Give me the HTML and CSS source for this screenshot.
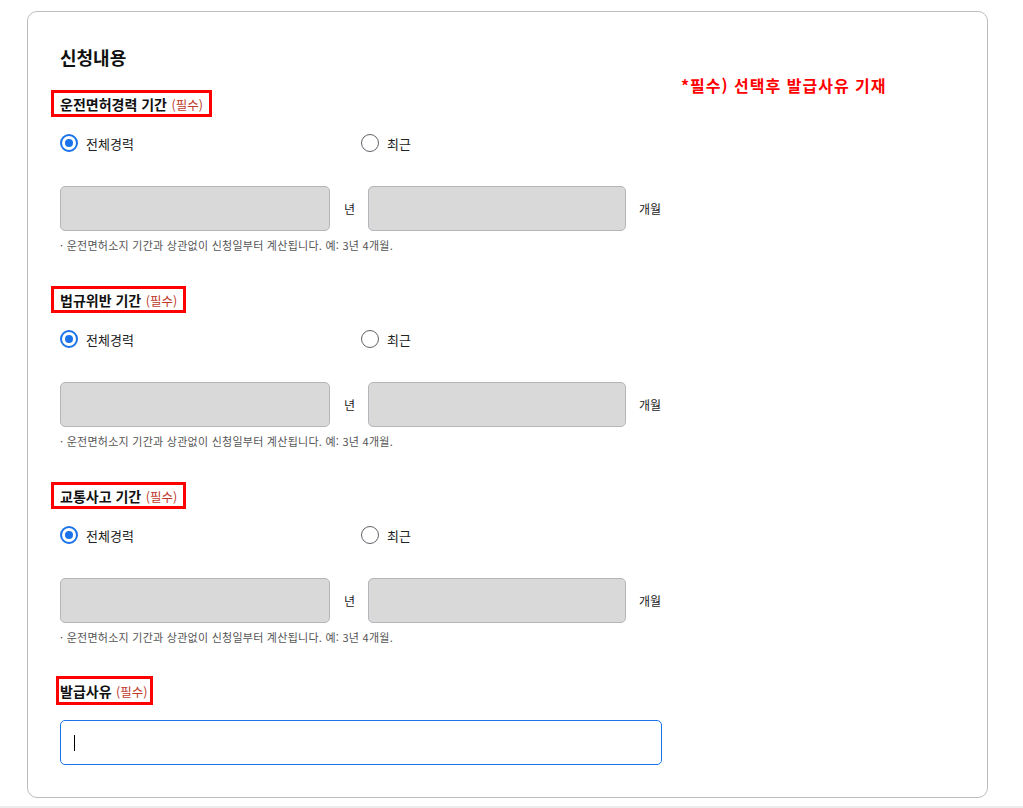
FILE: index.html
```html
<!DOCTYPE html>
<html lang="ko">
<head>
<meta charset="utf-8">
<title>신청내용</title>
<link rel="stylesheet" href="styles.css">
</head>
<body>
<div class="page">
  <div class="card">
    <h2 class="card-title">신청내용</h2>
    <p class="note">*필수) 선택후 발급사유 기재</p>

    <section class="field">
      <div class="label-box"><span class="label">운전면허경력 기간</span> <span class="req">(필수)</span></div>
      <div class="radios">
        <label class="radio"><span class="dot checked"></span><span>전체경력</span></label>
        <label class="radio"><span class="dot"></span><span>최근</span></label>
      </div>
      <div class="period">
        <div class="box box-year"></div><span class="unit unit-year">년</span>
        <div class="box box-month"></div><span class="unit unit-month">개월</span>
      </div>
      <p class="help">· 운전면허소지 기간과 상관없이 신청일부터 계산됩니다. 예: 3년 4개월.</p>
    </section>

    <section class="field">
      <div class="label-box"><span class="label">법규위반 기간</span> <span class="req">(필수)</span></div>
      <div class="radios">
        <label class="radio"><span class="dot checked"></span><span>전체경력</span></label>
        <label class="radio"><span class="dot"></span><span>최근</span></label>
      </div>
      <div class="period">
        <div class="box box-year"></div><span class="unit unit-year">년</span>
        <div class="box box-month"></div><span class="unit unit-month">개월</span>
      </div>
      <p class="help">· 운전면허소지 기간과 상관없이 신청일부터 계산됩니다. 예: 3년 4개월.</p>
    </section>

    <section class="field">
      <div class="label-box"><span class="label">교통사고 기간</span> <span class="req">(필수)</span></div>
      <div class="radios">
        <label class="radio"><span class="dot checked"></span><span>전체경력</span></label>
        <label class="radio"><span class="dot"></span><span>최근</span></label>
      </div>
      <div class="period">
        <div class="box box-year"></div><span class="unit unit-year">년</span>
        <div class="box box-month"></div><span class="unit unit-month">개월</span>
      </div>
      <p class="help">· 운전면허소지 기간과 상관없이 신청일부터 계산됩니다. 예: 3년 4개월.</p>
    </section>

    <section class="field field-last">
      <div class="label-box label-box-tight"><span class="label">발급사유</span> <span class="req">(필수)</span></div>
      <div class="reason"><span class="caret"></span></div>
    </section>
  </div>
  <div class="footer-strip"></div>
</div>
</body>
</html>
```

FILE: styles.css
```css
* { box-sizing: border-box; }

html, body {
  margin: 0;
  padding: 0;
  background: #ffffff;
}

body {
  font-family: "Noto Sans CJK KR", "Noto Sans", sans-serif;
  color: #111;
  width: 1023px;
  height: 808px;
  overflow: hidden;
}

.page {
  padding: 11px 36px 0 27px;
}

.card {
  position: relative;
  width: 961px;
  height: 787px;
  border: 1px solid #bdbdbd;
  border-radius: 10px;
  padding: 33px 32px 0 32px;
}

.card-title {
  margin: 0 0 21px 0;
  font-size: 18px;
  line-height: 24px;
  font-weight: 700;
  color: #111;
}

.note {
  position: absolute;
  left: 653px;
  top: 62px;
  margin: 0;
  font-size: 16px;
  line-height: 22px;
  font-weight: 700;
  letter-spacing: 1px;
  color: #ff0000;
}

.field {
  width: 602px;
  margin-bottom: 33px;
}

.label-box {
  display: inline-block;
  margin-left: -9px;
  border: 3px solid #ff0000;
  padding: 0 6px;
  height: 27px;
  line-height: 21px;
  white-space: nowrap;
}

.label-box-tight {
  margin-left: -4px;
  margin-top: -2px;
  padding: 0 3px 0 1px;
  height: 29px;
  line-height: 23px;
}

.label {
  font-size: 14px;
  font-weight: 700;
  color: #111;
}

.req {
  font-size: 12.5px;
  color: #c0392b;
}

.radios {
  display: grid;
  grid-template-columns: 1fr 1fr;
  margin-top: 16px;
  height: 20px;
}

.radio {
  display: flex;
  align-items: center;
  gap: 8px;
  font-size: 13px;
  color: #222;
}

.dot {
  width: 18px;
  height: 18px;
  border-radius: 50%;
  border: 1.5px solid #5f6368;
  background: #fff;
  flex: none;
  position: relative;
}

.dot.checked {
  border: 2px solid #1a73e8;
}

.dot.checked::after {
  content: "";
  position: absolute;
  left: 3px;
  top: 3px;
  width: 8px;
  height: 8px;
  border-radius: 50%;
  background: #1a73e8;
}

.period {
  display: flex;
  align-items: center;
  margin-top: 33px;
  height: 45px;
}

.box {
  height: 45px;
  background: #d9d9d9;
  border: 1px solid #b3b7bb;
  border-radius: 5px;
  flex: none;
}

.box-year { width: 270px; }
.box-month { width: 258px; }

.unit {
  font-size: 12px;
  color: #222;
}

.unit-year { margin: 0 13px 0 14px; }
.unit-month { margin-left: 13px; }

.help {
  margin: 6px 0 0 0;
  font-size: 11px;
  line-height: 16px;
  color: #555;
  letter-spacing: 0.26px;
}

.field-last {
  margin-bottom: 0;
}

.reason {
  margin-top: 15px;
  width: 602px;
  height: 45px;
  border: 1px solid #1a73e8;
  border-radius: 5px;
  background: #fff;
  display: flex;
  align-items: center;
  padding-left: 13px;
}

.caret {
  display: block;
  width: 1px;
  height: 16px;
  background: #000;
}

.footer-strip {
  position: absolute;
  left: 0;
  top: 806px;
  width: 1023px;
  height: 2px;
  background: #ececec;
}
```
